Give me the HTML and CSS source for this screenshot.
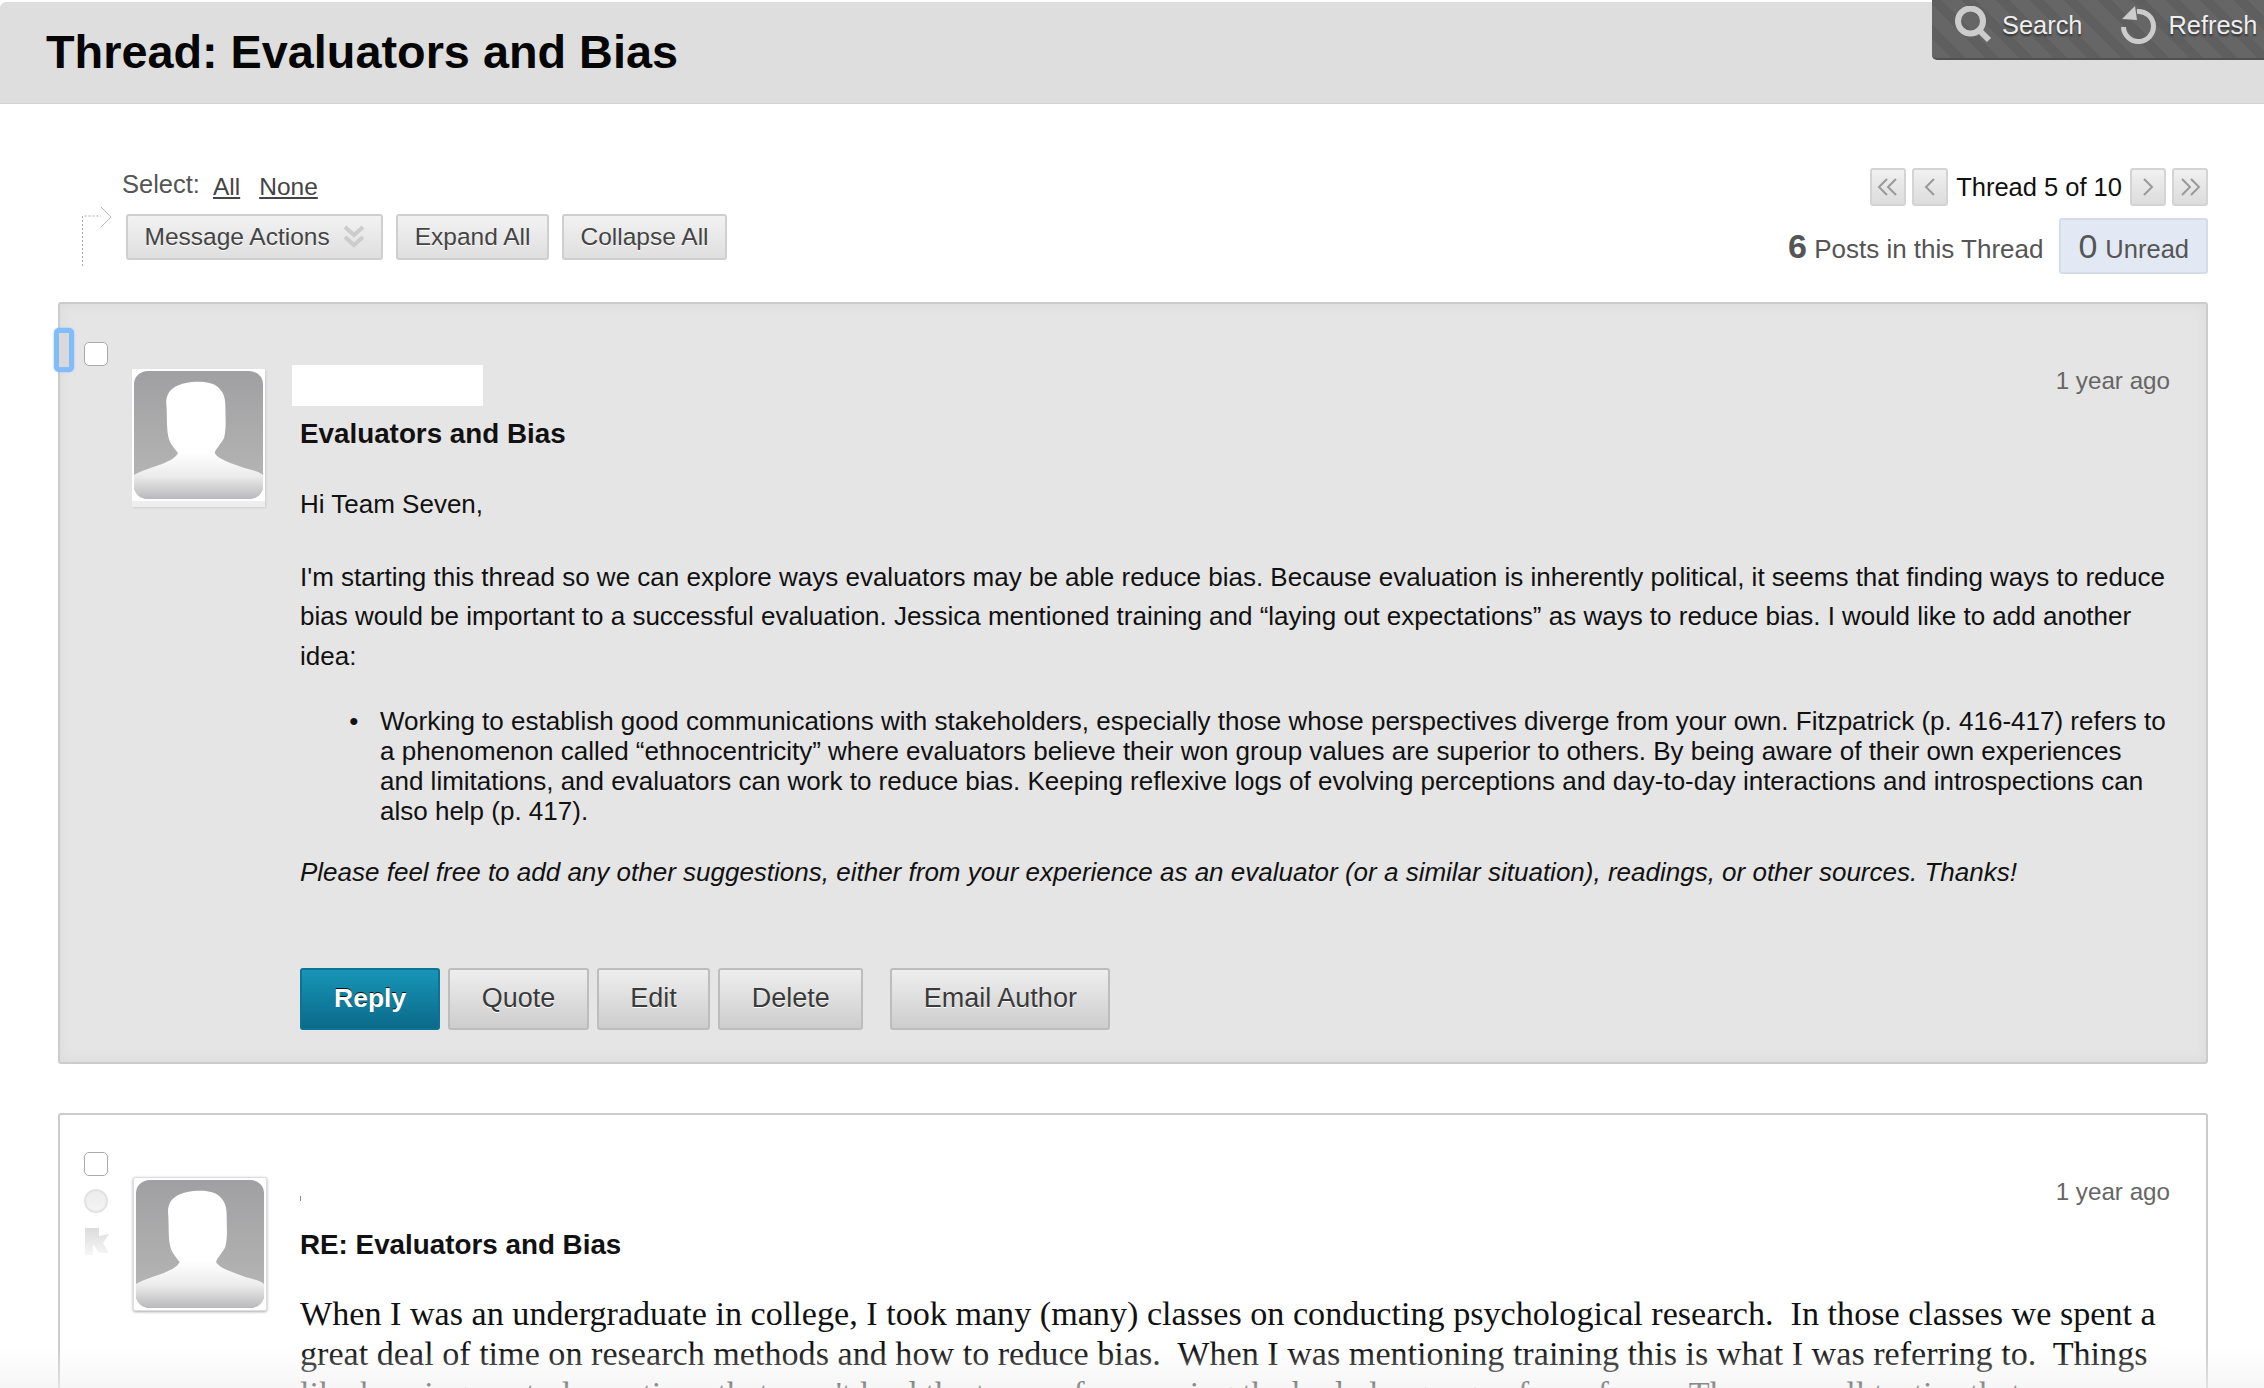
FILE: index.html
```html
<!DOCTYPE html>
<html lang="en">
<head>
    <meta charset="UTF-8">
    <title>Thread: Evaluators and Bias</title>
    <link rel="stylesheet" href="styles.css">
</head>
<body>
    <!-- Page header -->
    <header class="page-header">
        <h1>Thread: Evaluators and Bias</h1>
        <div class="tools">
            <a class="tool">
                <svg width="38" height="38" viewBox="0 0 38 38"><circle cx="15.500" cy="15" r="12.500" fill="none" stroke="#ccc" stroke-width="6"/><path d="M24 24l10 10" stroke="#ccc" stroke-width="6"/></svg>
                Search
            </a>
            <a class="tool">
                <svg width="38" height="38" viewBox="0 0 38 38"><path d="M16 5.500A15 15 0 1 1 2.500 21" fill="none" stroke="#ccc" stroke-width="5"/><path d="M14 0l2 14-15-1z" fill="#ccc"/></svg>
                Refresh
            </a>
        </div>
    </header>

    <main class="content">
        <!-- Toolbar -->
        <div class="toolbar">
            <div class="toolbar-left">
                <svg class="tree-arrow" width="32" height="60" viewBox="0 0 32 60"><path d="M1.500 60V10H20" fill="none" stroke="#aaa" stroke-dasharray="2 2"/><path d="M20 1l10 10-10 10" fill="none" stroke="#bbb"/></svg>
                <div>
                    <div class="select-row">
                        <span>Select:</span>
                        <a>All</a>
                        <a>None</a>
                    </div>
                    <div class="action-row">
                        <button class="btn btn-small">Message Actions
                            <svg width="22" height="24" viewBox="0 0 22 24"><path d="M2 2l9 8 9-8M2 12l9 8 9-8" fill="none" stroke="#ccc" stroke-width="4"/></svg>
                        </button>
                        <button class="btn btn-small">Expand All</button>
                        <button class="btn btn-small">Collapse All</button>
                    </div>
                </div>
            </div>
            <div class="toolbar-right">
                <div class="pager">
                    <button class="page-btn"><svg width="22" height="18" viewBox="0 0 22 18"><path d="M10 1L2 9l8 8M19 1l-8 8 8 8" fill="none" stroke="#999" stroke-width="2"/></svg></button>
                    <button class="page-btn"><svg width="12" height="18" viewBox="0 0 12 18"><path d="M10 1L2 9l8 8" fill="none" stroke="#999" stroke-width="2"/></svg></button>
                    <span class="pager-text">Thread 5 of 10</span>
                    <button class="page-btn"><svg width="12" height="18" viewBox="0 0 12 18"><path d="M2 1l8 8-8 8" fill="none" stroke="#999" stroke-width="2"/></svg></button>
                    <button class="page-btn"><svg width="22" height="18" viewBox="0 0 22 18"><path d="M3 1l8 8-8 8M12 1l8 8-8 8" fill="none" stroke="#999" stroke-width="2"/></svg></button>
                </div>
                <div class="counts">
                    <span class="post-count"><b>6</b> Posts in this Thread</span>
                    <span class="unread"><span class="unread-num">0</span> Unread</span>
                </div>
            </div>
        </div>

        <!-- First post -->
        <article class="post post-open">
            <div class="post-marks">
                <span class="focus-ring"></span>
                <input type="checkbox" class="mark-box">
            </div>
            <div class="avatar avatar-first">
                <svg width="129" height="128" viewBox="0 0 120 128" preserveAspectRatio="none"><use href="#person"/></svg>
            </div>
            <div class="post-body">
                <div class="post-top">
                    <div class="author-hidden"></div>
                    <span class="post-date">1 year ago</span>
                </div>
                <h2>Evaluators and Bias</h2>
                <p class="first-line">Hi Team Seven,</p>
                <p>I'm starting this thread so we can explore ways evaluators may be able reduce bias. Because evaluation is inherently political, it seems that finding ways to reduce bias would be important to a successful evaluation. Jessica mentioned training and “laying out expectations” as ways to reduce bias. I would like to add another idea:</p>
                <ul>
                    <li>Working to establish good communications with stakeholders, especially those whose perspectives diverge from your own. Fitzpatrick (p. 416-417) refers to a phenomenon called “ethnocentricity” where evaluators believe their won group values are superior to others. By being aware of their own experiences and limitations, and evaluators can work to reduce bias. Keeping reflexive logs of evolving perceptions and day-to-day interactions and introspections can also help (p. 417).</li>
                </ul>
                <p class="closing"><em>Please feel free to add any other suggestions, either from your experience as an evaluator (or a similar situation), readings, or other sources. Thanks!</em></p>
                <div class="post-actions">
                    <button class="btn btn-reply">Reply</button>
                    <button class="btn">Quote</button>
                    <button class="btn">Edit</button>
                    <button class="btn">Delete</button>
                    <button class="btn btn-gap">Email Author</button>
                </div>
            </div>
        </article>

        <!-- Second post -->
        <article class="post post-reply">
            <div class="post-marks">
                <input type="checkbox" class="mark-box">
                <span class="read-dot"></span>
                <svg class="flag" width="26" height="28" viewBox="0 0 26 28"><defs><linearGradient id="flag-fade" x1="0" y1="0" x2="0" y2="1"><stop offset="0" stop-color="#dcdcdc"/><stop offset="1" stop-color="#f6f6f6"/></linearGradient></defs><path d="M1 1h14v8l10-2-6 9 6 10H15l-6-9v11H1z" fill="url(#flag-fade)"/></svg>
            </div>
            <div class="avatar avatar-second">
                <svg width="128" height="128" viewBox="0 0 120 128" preserveAspectRatio="none"><use href="#person"/></svg>
            </div>
            <div class="post-body">
                <div class="post-top">
                    <span class="author-dot"></span>
                    <span class="post-date">1 year ago</span>
                </div>
                <h2>RE: Evaluators and Bias</h2>
                <p class="serif">When I was an undergraduate in college, I took many (many) classes on conducting psychological research.&nbsp; In those classes we spent a great deal of time on research methods and how to reduce bias.&nbsp; When I was mentioning training this is what I was referring to.&nbsp; Things like keeping neutral questions that won't lead the types of answering the body language of you from.&nbsp; Those are all tactics that</p>
            </div>
        </article>
    </main>

    <div class="bottom-fade"></div>

    <!-- Default profile picture -->
    <svg width="0" height="0" class="defs">
        <defs>
            <linearGradient id="bg" x1="0" y1="0" x2="0" y2="1"><stop offset="0" stop-color="#a0a0a2"/><stop offset="1" stop-color="#b8b8b8"/></linearGradient>
            <linearGradient id="body" x1="0" y1="0" x2="0" y2="1"><stop offset="0" stop-color="#fff"/><stop offset=".6" stop-color="#fff"/><stop offset=".8" stop-color="#ececec"/><stop offset="1" stop-color="#b9b9bb"/></linearGradient>
            <clipPath id="round"><rect width="120" height="128" rx="13"/></clipPath>
            <g id="person">
                <g clip-path="url(#round)">
                    <rect width="120" height="128" fill="url(#bg)"/>
                    <path d="M30 32C30 18 40 14 48 12C58 10 72 10 78 16C84 22 85 28 85 36C85 46 86 56 84 66C82 72 77 76 75 82C78 88 90 92 100 96C108 99 116 100 120 104V128H0V104C6 100 18 96 26 93C32 90 38 88 41 82C38 78 33 72 32 66C30 56 31 44 30 32Z" fill="url(#body)"/>
                </g>
            </g>
        </defs>
    </svg>
</body>
</html>
```

FILE: styles.css
```css
/* General */
body {
    margin: 0;
    height: 1388px;
    overflow: hidden;
    position: relative;
    font-family: "Liberation Sans", Arial, sans-serif;
    background-color: white;
    color: #111;
}

.defs {
    position: absolute;
}

/* Header */
.page-header {
    display: flex;
    justify-content: space-between;
    align-items: flex-start;
    height: 101px;
    margin-top: 2px;
    padding-left: 46px;
    background-color: #dedede;
    border-bottom: 1px solid #d4d4d4;
    border-radius: 6px 0 0 0;
}

.page-header h1 {
    margin: 24px 0 0;
    font-size: 46.800px;
    line-height: 52px;
    font-weight: bold;
    color: #060606;
}

.tools {
    display: flex;
    gap: 39px;
    width: 332px;
    height: 60px;
    margin-top: -2px;
    padding: 2px 0 0 23px;
    box-sizing: border-box;
    border-radius: 0 0 0 5px;
    border-bottom: 2px solid #505050;
    background: repeating-linear-gradient(45deg, #666 0, #666 14px, #5f5f5f 14px, #5f5f5f 24px);
    white-space: nowrap;
}

.tool {
    display: flex;
    align-items: center;
    gap: 9px;
    height: 46px;
    font-size: 25.400px;
    color: #eee;
    text-shadow: 0 2px 2px #333;
}

/* Toolbar */
.content {
    padding: 0 56px 0 58px;
}

.toolbar {
    display: flex;
    justify-content: space-between;
    height: 198px;
    box-sizing: border-box;
    padding-top: 64px;
}

.toolbar-left {
    display: flex;
    margin-left: 23px;
}

.tree-arrow {
    margin-top: 38px;
    margin-right: 13px;
}

.select-row {
    display: flex;
    align-items: baseline;
    height: 41px;
    margin-left: -4px;
    padding-top: 2px;
    box-sizing: border-box;
    font-size: 25.500px;
    color: #555;
}

.select-row a {
    margin-left: 13px;
    font-size: 24.500px;
    color: #444;
    text-decoration: underline;
    position: relative;
    top: 2px;
}

.select-row a + a {
    margin-left: 19px;
}

.action-row {
    display: flex;
    gap: 13px;
    margin-top: 5px;
}

.btn {
    font-family: inherit;
    padding: 0 31.500px;
    height: 62px;
    font-size: 27px;
    color: #3a3a3a;
    background: linear-gradient(#eee, #cdcdcd);
    border: 2px solid #bdbdbd;
    border-radius: 3px;
    text-shadow: 0 1px 0 #fff;
}

.btn-small {
    display: flex;
    align-items: center;
    gap: 13px;
    height: 46px;
    padding: 0 16.500px;
    font-size: 24.500px;
    color: #444;
    background: linear-gradient(#f2f2f2, #dfdfdf);
    border: 2px solid #cfcfcf;
}

.toolbar-right {
    display: flex;
    flex-direction: column;
    align-items: flex-end;
}

.pager {
    display: flex;
    align-items: center;
    gap: 6px;
}

.pager-text {
    margin: 0 2px;
    font-size: 25.500px;
    color: #111;
}

.page-btn {
    display: flex;
    align-items: center;
    justify-content: center;
    width: 36px;
    height: 38px;
    padding: 0;
    background: linear-gradient(#f0f0f0, #dcdcdc);
    border: 2px solid #d4d4d4;
    border-radius: 3px;
}

.counts {
    display: flex;
    align-items: center;
    gap: 16px;
    margin-top: 12px;
}

.post-count {
    font-size: 26px;
    color: #555;
}

.post-count b {
    font-size: 34px;
}

.unread {
    display: flex;
    align-items: baseline;
    gap: 8px;
    height: 56px;
    box-sizing: border-box;
    padding: 0 17px;
    font-size: 25.500px;
    line-height: 52px;
    color: #555;
    background-color: #e2e9f4;
    border: 2px solid #d3dce8;
    border-radius: 3px;
}

.unread-num {
    font-size: 34px;
}

/* Posts */
.post {
    display: flex;
    border: 2px solid #ccc;
    border-radius: 3px;
    position: relative;
}

.post-open {
    height: 762px;
    box-sizing: border-box;
    background-color: #e5e5e5;
    box-shadow: inset 0 0 14px #dadada;
}

.post-reply {
    margin-top: 49px;
    height: 400px;
    box-sizing: border-box;
    background-color: white;
}

.post-marks {
    display: flex;
    flex-direction: column;
    align-items: flex-start;
    width: 70px;
    flex-shrink: 0;
    padding: 38px 0 0 24px;
    box-sizing: border-box;
}

.post-reply .post-marks {
    padding-top: 37px;
}

.mark-box {
    appearance: none;
    width: 24px;
    height: 24px;
    margin: 0;
    background-color: white;
    border: 1px solid #aaa;
    border-radius: 5px;
}

.focus-ring {
    position: absolute;
    left: -6px;
    top: 24px;
    width: 10px;
    height: 34px;
    background-color: #d9d9d9;
    border: 5px solid #82bcfb;
    border-radius: 5px;
    box-shadow: 0 0 2px #82bcfb;
}

.read-dot {
    width: 24px;
    height: 24px;
    margin-top: 13px;
    border-radius: 50%;
    background: linear-gradient(#ececec, #f4f4f4);
    border: 2px solid #e2e2e2;
    box-sizing: border-box;
}

.flag {
    margin-top: 14px;
}

.avatar {
    flex-shrink: 0;
    background-color: white;
    line-height: 0;
    align-self: flex-start;
}

.avatar-first {
    margin-top: 65px;
    margin-left: 2px;
    padding: 2px;
    border-bottom: 6px solid #eee;
    box-shadow: 1px 1px 2px #ccc;
}

.avatar-second {
    margin-top: 62px;
    margin-left: 3px;
    padding: 2px;
    border-radius: 2px;
    box-shadow: 0 1px 3px #aaa;
    border: 1px solid #ddd;
}

.post-body {
    flex: 1;
    min-width: 0;
    padding-left: 35px;
    padding-right: 37px;
    font-size: 26px;
    color: #111;
}

.post-reply .post-body {
    padding-left: 33px;
}

.post-top {
    display: flex;
    justify-content: space-between;
    height: 41px;
    padding-top: 61px;
}

.author-hidden {
    width: 191px;
    height: 41px;
    margin-left: -8px;
    background-color: white;
}

.post-date {
    margin-top: 2px;
    margin-right: -1px;
    font-size: 24.200px;
    color: #666;
}

.author-dot {
    width: 1px;
    height: 5px;
    margin-top: 20px;
    background-color: #888;
}

.post-body h2 {
    margin: 11px 0 0;
    font-size: 27.800px;
    line-height: 34px;
    font-weight: bold;
}

.post-body p {
    margin: 0;
    line-height: 39.500px;
}

.post-body p.first-line {
    margin-top: 34px;
    margin-bottom: 33px;
}

.post-body ul {
    margin: 30px 0 0;
    padding-left: 80px;
}

.post-body li {
    line-height: 30px;
}

.post-body li::marker {
    content: "•\00a0\00a0\00a0";
}

.post-body p.closing {
    margin-top: 27px;
}

.post-actions {
    display: flex;
    gap: 8px;
    margin-top: 75px;
}

.post-actions .btn-reply {
    font-size: 26.500px;
    padding: 0 32px;
    font-weight: bold;
    color: white;
    text-shadow: 0 -1px 0 #111;
    background: linear-gradient(#1795b7, #0b6a8a);
    border-color: #0d7394;
}

.post-actions .btn-gap {
    margin-left: 19px;
}

.post-body p.serif {
    margin-top: 32px;
    font-family: "Liberation Serif", "DejaVu Serif", serif;
    font-size: 34.150px;
    line-height: 40px;
    color: #111;
}

.bottom-fade {
    position: absolute;
    left: 0;
    right: 0;
    bottom: 0;
    height: 40px;
    background: linear-gradient(rgba(240, 240, 240, 0), rgba(240, 240, 240, 0.6));
}
```
